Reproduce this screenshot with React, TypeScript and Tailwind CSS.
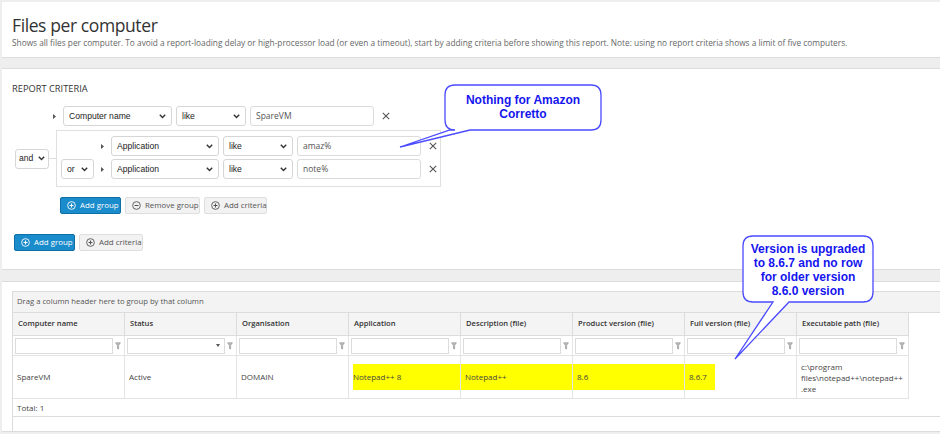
import React from 'react';

function Chevron() {
  return (
    <svg width="7" height="5" viewBox="0 0 7 5" className="shrink-0">
      <polyline points="0.8,0.8 3.5,3.6 6.2,0.8" fill="none" stroke="#333" strokeWidth={1.4} />
    </svg>
  );
}

function Select({ label, w, tight }: { label: string; w: string; tight?: boolean }) {
  return (
    <div className={`${w} h-[20px] flex items-center justify-between ${tight ? 'pl-[3px] pr-[3px]' : 'pl-[5px] pr-[5px]'} border border-[#d6d6d6] rounded-[3px] bg-white font-['Liberation_Sans',Arial,sans-serif] text-[8.6px] text-[#222]`}>
      <span>{label}</span>
      <Chevron />
    </div>
  );
}

function TextInput({ value }: { value: string }) {
  return (
    <div className="w-[124px] h-[20px] flex items-center pl-[5px] border border-[#dcdcdc] rounded-[3px] bg-white text-[8.5px] text-[#555]">
      {value}
    </div>
  );
}

function Cross() {
  return (
    <svg width="8" height="8" viewBox="0 0 8 8" className="ml-[4px] shrink-0">
      <path d="M0.8 0.8 L7.2 7.2 M7.2 0.8 L0.8 7.2" stroke="#555" strokeWidth={1.1} />
    </svg>
  );
}

function Tri() {
  return (
    <div className="w-[9px] flex justify-center">
      <svg width="3" height="5" viewBox="0 0 3 5">
        <path d="M0 0 L3 2.5 L0 5 Z" fill="#555" />
      </svg>
    </div>
  );
}

function CircleIcon({ minus, color }: { minus?: boolean; color: string }) {
  return (
    <svg width="9" height="9" viewBox="0 0 10 10" className="shrink-0">
      <circle cx="5" cy="5" r="4.3" fill="none" stroke={color} strokeWidth={1} />
      <path d={minus ? 'M2.8 5 H7.2' : 'M2.8 5 H7.2 M5 2.8 V7.2'} stroke={color} strokeWidth={1.2} />
    </svg>
  );
}

function Btn({ label, primary, minus, w }: { label: string; primary?: boolean; minus?: boolean; w: string }) {
  return primary ? (
    <div className={`${w} h-[17px] flex items-center gap-[4px] pl-[6px] whitespace-nowrap rounded-[2px] bg-[#1a8bcb] border border-[#0e6ea6] text-white text-[7.9px]`}>
      <CircleIcon color="#fff" />
      {label}
    </div>
  ) : (
    <div className={`${w} h-[17px] flex items-center gap-[4px] pl-[6px] whitespace-nowrap rounded-[2px] bg-[#f2f2f2] border border-[#dedede] text-[#555] text-[7.9px]`}>
      <CircleIcon color="#555" minus={minus} />
      {label}
    </div>
  );
}

function FilterIcon() {
  return (
    <svg width="6" height="8" viewBox="0 0 6 8" className="shrink-0">
      <path d="M0.6 0.8 H5.4 L3.6 3.4 V7 L2.4 6.4 V3.4 Z" fill="#bbb" stroke="#999" strokeWidth={0.7} />
    </svg>
  );
}

const columns = [
  'Computer name',
  'Status',
  'Organisation',
  'Application',
  'Description (file)',
  'Product version (file)',
  'Full version (file)',
  'Executable path (file)',
];

const row = ['SpareVM', 'Active', 'DOMAIN', 'Notepad++ 8', 'Notepad++', '8.6', '8.6.7'];

export default function App() {
  return (
    <div className="relative w-[940px] h-[434px] overflow-hidden bg-[#eeeeee] font-['Open_Sans',sans-serif]">
      {/* Header */}
      <div className="ml-[2px] mt-[2px] h-[56px] bg-white border-b border-[#dcdcdc] pl-[10px] pt-[12px]">
        <h1 className="text-[17.5px] leading-[22px] tracking-[-0.4px] text-[#333]">Files per computer</h1>
        <p className="text-[8.3px] leading-[10px] text-[#666] mt-[2px]">
          Shows all files per computer. To avoid a report-loading delay or high-processor load (or even a timeout), start by adding criteria before showing this report. Note: using no report criteria shows a limit of five computers.
        </p>
      </div>

      {/* Report criteria */}
      <div className="ml-[2px] mt-[10px] h-[202px] bg-white border-t border-b border-[#dcdcdc] pl-[10px] pt-[14px]">
        <div className="text-[9.3px] leading-[12px] text-[#333]">REPORT CRITERIA</div>
        <div className="mt-[11px] ml-[38px] flex items-center gap-[4px]">
          <Tri />
          <Select label="Computer name" w="w-[109px]" />
          <Select label="like" w="w-[70px]" />
          <TextInput value="SpareVM" />
          <Cross />
        </div>
        <div className="mt-[4px] ml-[3px] flex items-center">
          <Select label="and" w="w-[34px]" tight />
          <div className="w-[7px] h-px bg-[#ddd]" />
          <div className="w-[385px] h-[57px] border border-[#e0e0e0] pl-[4px] pt-[5px] flex flex-col gap-[3px]">
            <div className="flex items-center gap-[4px]">
              <div className="w-[33px]" />
              <Tri />
              <Select label="Application" w="w-[108px]" />
              <Select label="like" w="w-[70px]" />
              <TextInput value="amaz%" />
              <Cross />
            </div>
            <div className="flex items-center gap-[4px]">
              <Select label="or" w="w-[33px]" />
              <Tri />
              <Select label="Application" w="w-[108px]" />
              <Select label="like" w="w-[70px]" />
              <TextInput value="note%" />
              <Cross />
            </div>
          </div>
        </div>
        <div className="mt-[10px] ml-[48px] flex gap-[4px]">
          <Btn label="Add group" primary w="w-[61px]" />
          <Btn label="Remove group" minus w="w-[75px]" />
          <Btn label="Add criteria" w="w-[63px]" />
        </div>
        <div className="mt-[20px] ml-[2px] flex gap-[4px]">
          <Btn label="Add group" primary w="w-[61px]" />
          <Btn label="Add criteria" w="w-[64px]" />
        </div>
      </div>

      {/* Results */}
      <div className="ml-[2px] mt-[11px] h-[151px] bg-white border-t border-b border-[#dcdcdc] pl-[10px] pt-[9px]">
        <div className="border-l border-[#dcdcdc]">
          <div className="h-[22px] flex items-center pl-[4px] bg-[#f3f3f3] border-t border-b border-[#dcdcdc] text-[7.7px] text-[#555]">
            Drag a column header here to group by that column
          </div>
          <div className="grid grid-cols-[repeat(8,112px)]">
            {columns.map((c) => (
              <div key={c} className="h-[23px] flex items-center pl-[5px] bg-[#f4f4f4] border-r border-b border-[#dcdcdc] text-[7.6px] font-semibold text-[#333]">
                {c}
              </div>
            ))}
            {columns.map((c, i) => (
              <div key={'f' + c} className="h-[20px] flex items-center justify-between pl-[2px] pr-[3px] border-r border-b border-[#e4e4e4]">
                <div className="w-[98px] h-[16px] border border-[#dcdcdc] flex items-center justify-end pr-[4px]">
                  {i === 1 && (
                    <svg width="4" height="3" viewBox="0 0 4 3">
                      <path d="M0 0 H4 L2 3 Z" fill="#555" />
                    </svg>
                  )}
                </div>
                <FilterIcon />
              </div>
            ))}
            <div className="relative col-span-8 grid grid-cols-[repeat(8,112px)] h-[43px]">
              <div className="absolute left-[340px] top-[8px] w-[362px] h-[26px] bg-[#ffff00]" />
              {row.map((v, i) => (
                <div key={i} className="relative flex items-center pl-[4px] border-r border-b border-[#e4e4e4] text-[8px] text-[#444]">
                  {v}
                </div>
              ))}
              <div className="relative flex flex-col justify-center pl-[4px] border-r border-b border-[#e4e4e4] text-[8px] leading-[11px] text-[#444]">
                <span>c:\program</span>
                <span>files\notepad++\notepad++</span>
                <span>.exe</span>
              </div>
            </div>
          </div>
          <div className="h-[18px] flex items-center pl-[4px] border-b border-[#dcdcdc] text-[8px] text-[#444]">Total: 1</div>
          <div className="h-[15px]" />
        </div>
      </div>

      {/* Callouts */}
      <svg className="absolute inset-0 pointer-events-none" width="940" height="434">
        <path
          d="M455,85 H591 Q601,85 601,95 V120 Q601,130 591,130 H470 L400,147 L450,130 H455 Q445,130 445,120 V95 Q445,85 455,85 Z"
          fill="#fff"
          stroke="#4b4bff"
          strokeWidth={1.3}
        />
        <path
          d="M753,236 H863 Q873,236 873,246 V292 Q873,302 863,302 H789 L735,359 L773,302 H753 Q743,302 743,292 V246 Q743,236 753,236 Z"
          fill="#fff"
          stroke="#4b4bff"
          strokeWidth={1.3}
        />
      </svg>
      <div className="absolute left-[445px] top-[93px] w-[156px] text-center font-['Liberation_Sans',Arial,sans-serif] font-bold text-[12px] leading-[14px] text-[#1515ee]">
        Nothing for Amazon
        <br />
        Corretto
      </div>
      <div className="absolute left-[743px] top-[242px] w-[130px] text-center font-['Liberation_Sans',Arial,sans-serif] font-bold text-[12px] leading-[14px] text-[#1515ee]">
        Version is upgraded
        <br />
        to 8.6.7 and no row
        <br />
        for older version
        <br />
        8.6.0 version
      </div>
    </div>
  );
}
